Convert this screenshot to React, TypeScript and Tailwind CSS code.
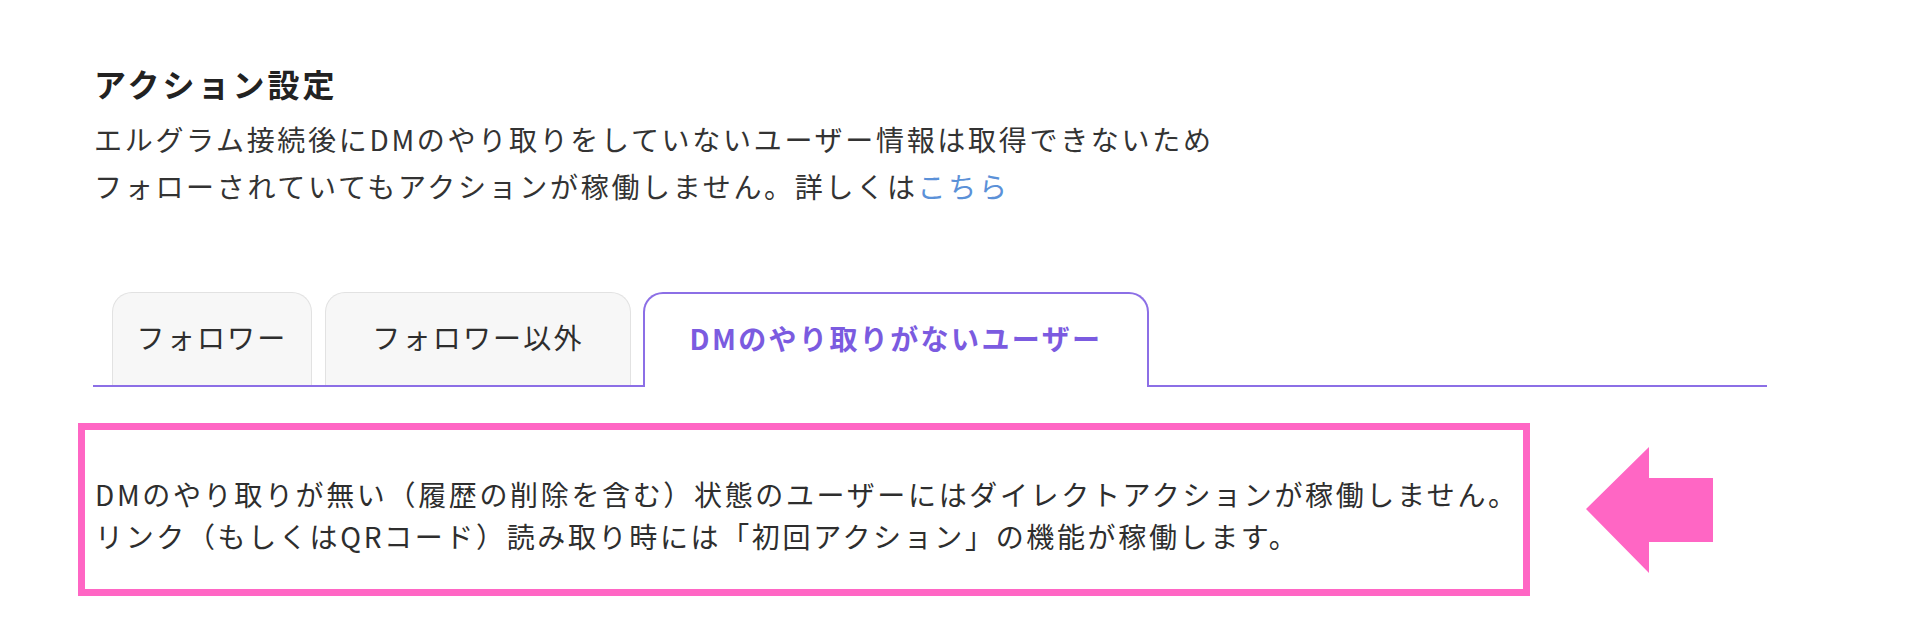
import React from 'react'

const font = { fontFamily: '"Noto Sans CJK JP", "Noto Sans", sans-serif' }

function Tab({ label, width }: { label: string; width: string }) {
  return (
    <div
      className={`${width} h-[93px] shrink-0 rounded-t-[20px] border border-b-0 border-[#e2e2e2] bg-[#f7f7f7] pt-[25px] text-center text-[28px] leading-[38px] tracking-[2.2px] text-[#2e2e2e]`}
    >
      {label}
    </div>
  )
}

export default function App() {
  return (
    <div className="h-[640px] w-[1920px] bg-white" style={font}>
      <div className="pl-[94px] pt-[63px]">
        <h2 className="text-[32px] font-bold leading-[40px] tracking-[3px] text-[#222]">アクション設定</h2>
        <p className="mt-[13px] text-[28px] leading-[47px] tracking-[2.7px] text-[#333]">
          エルグラム接続後にDMのやり取りをしていないユーザー情報は取得できないため
          <br />
          フォローされていてもアクションが稼働しません。詳しくは
          <a className="text-[#5b91d8]">こちら</a>
        </p>
      </div>

      {/* tab row */}
      <div className="ml-[93px] mt-[82px] flex w-[1674px] items-end">
        <div className="flex items-end gap-[13px] border-b-2 border-[#8c6fe6] pl-[19px] pr-[12px]">
          <Tab label="フォロワー" width="w-[200px]" />
          <Tab label="フォロワー以外" width="w-[306px]" />
        </div>
        <div className="h-[95px] w-[506px] shrink-0 rounded-t-[20px] border-2 border-b-0 border-[#8c6fe6] bg-white pt-[25px] text-center text-[28px] font-bold leading-[38px] tracking-[2.4px] text-[#7b5be0]">
          DMのやり取りがないユーザー
        </div>
        <div className="flex-1 border-b-2 border-[#8c6fe6]" />
      </div>

      {/* notice */}
      <div className="ml-[78px] mt-[36px] flex items-center">
        <div className="w-[1452px] border-[7px] border-[#ff66c4] pb-[32px] pl-[10px] pt-[43px]">
          <p className="text-[28px] leading-[42px] tracking-[2.65px] text-[#2e2e2e]">
            DMのやり取りが無い（履歴の削除を含む）状態のユーザーにはダイレクトアクションが稼働しません。
            <br />
            リンク（もしくはQRコード）読み取り時には「初回アクション」の機能が稼働します。
          </p>
        </div>
        <svg className="ml-[56px]" width="127" height="126" viewBox="0 0 127 126">
          <polygon points="0,62 63,0 63,31 127,31 127,95 63,95 63,126" fill="#ff66c4" />
        </svg>
      </div>
    </div>
  )
}
